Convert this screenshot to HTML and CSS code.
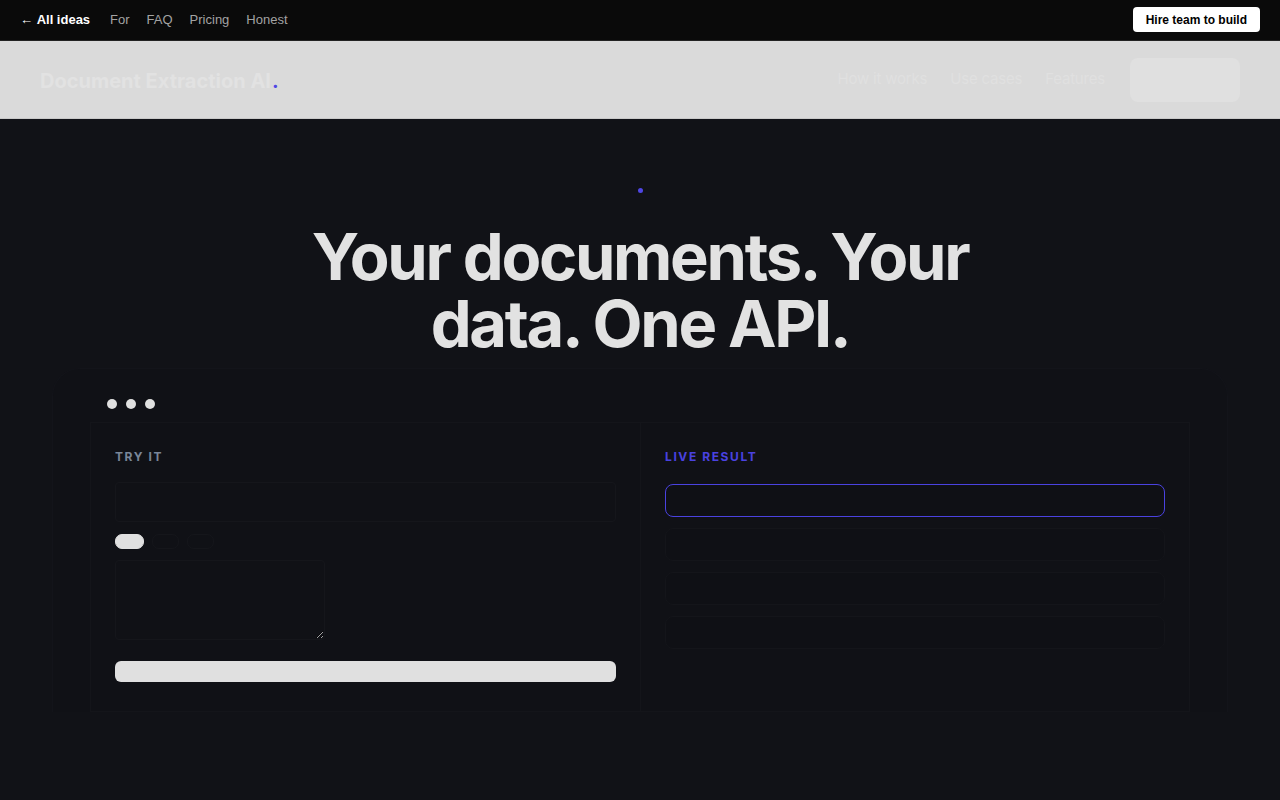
FILE: index.html
```html
<!DOCTYPE html>
<html>
    <head>
        <title>Document Extraction AI</title>
        <link rel="stylesheet" href="styles.css">
    </head>
    <body>
        <div class="topbar">
            <nav class="crumbs">
                <a class="back" href="#">&larr; <b>All ideas</b></a>
                <a href="#">For</a>
                <a href="#">FAQ</a>
                <a href="#">Pricing</a>
                <a href="#">Honest</a>
            </nav>
            <a class="hire" href="#">Hire team to build</a>
        </div>
        <header class="site">
            <div class="logo">Document Extraction AI<span class="dot">.</span></div>
            <nav class="links">
                <a href="#">How it works</a>
                <a href="#">Use cases</a>
                <a href="#">Features</a>
                <span class="cta"></span>
            </nav>
        </header>
        <main>
            <section class="hero">
                <span class="pip"></span>
                <h1>Your documents. Your<br>data. One API.</h1>
            </section>
            <section class="demo">
                <div class="lights">
                    <span></span><span></span><span></span>
                </div>
                <div class="panes">
                    <div class="pane">
                        <h4 class="label">Try it</h4>
                        <div class="field"></div>
                        <div class="chips">
                            <span class="chip on"></span>
                            <span class="chip"></span>
                            <span class="chip"></span>
                        </div>
                        <textarea></textarea>
                        <button class="run"></button>
                    </div>
                    <div class="pane">
                        <h4 class="label live">Live result</h4>
                        <div class="result active"></div>
                        <div class="result"></div>
                        <div class="result"></div>
                        <div class="result"></div>
                    </div>
                </div>
            </section>
        </main>
    </body>
</html>
```
FILE: styles.css
```css
html, body {
    margin: 0;
    background: #111217;
}

body {
    font-family: Inter, "Liberation Sans", sans-serif;
    min-height: 800px;
}

a {
    text-decoration: none;
}

.topbar {
    display: flex;
    align-items: center;
    justify-content: space-between;
    height: 40px;
    padding: 0 20px;
    background: #0a0a0a;
    border-bottom: 1px solid #222;
    font-family: "Liberation Sans", Arial, sans-serif;
    font-size: 13px;
}

    .crumbs {
        display: flex;
        gap: 17px;
        margin-top: -2px;
    }

    .crumbs a {
        color: #a3a3a3;
    }

    .crumbs a.back {
        color: #fff;
        margin-right: 3px;
    }

    .hire {
        background: #fff;
        color: #000;
        font-weight: bold;
        font-size: 12px;
        padding: 6px 13px 5px;
        border-radius: 4px;
        margin-top: -1px;
    }

header.site {
    display: flex;
    align-items: center;
    justify-content: space-between;
    height: 77px;
    padding: 0 40px;
    background: #dadada;
    border-bottom: 1px solid #c8c8c8;
}

    .logo {
        font-size: 20px;
        font-weight: 700;
        letter-spacing: 0;
        color: #e2e2e2;
        margin-top: 2px;
    }

    .logo .dot {
        color: #4f46e5;
        margin-left: 1px;
    }

    .links {
        display: flex;
        align-items: center;
        gap: 23px;
        font-size: 15px;
    }

    .links a {
        color: #e0e0e0;
        letter-spacing: -0.2px;
        margin-top: -2px;
    }

    .links .cta {
        display: block;
        width: 110px;
        height: 44px;
        margin-left: 2px;
        border-radius: 8px;
        background: #e0e0e0;
    }

.hero {
    display: flex;
    flex-direction: column;
    align-items: center;
    padding-top: 69px;
}

    .pip {
        width: 5px;
        height: 5px;
        border-radius: 50%;
        background: #4f46e5;
    }

    .hero h1 {
        margin: 30px 0 0;
        text-align: center;
        font-size: 65px;
        line-height: 67px;
        font-weight: 700;
        letter-spacing: -2.3px;
        color: #e2e2e2;
    }

.demo {
    margin: 11px 52px 0;
    padding: 30px 37px 0;
    border: 1px solid #13141a;
    border-bottom: 0;
    border-radius: 28px 28px 0 0;
    background: #101116;
}

    .lights {
        display: flex;
        gap: 9px;
        padding-left: 17px;
    }

    .lights span {
        width: 10px;
        height: 10px;
        border-radius: 50%;
        background: #e0e0e0;
    }

    .panes {
        display: grid;
        grid-template-columns: 1fr 1fr;
        margin-top: 13px;
        border: 1px solid #14151a;
    }

    .pane {
        padding: 26px 24px 29px;
        display: flex;
        flex-direction: column;
        align-items: flex-start;
    }

    .pane + .pane {
        border-left: 1px solid #14151a;
    }

.label {
    margin: 0 0 18px;
    font-size: 12px;
    font-weight: 700;
    letter-spacing: 1.6px;
    text-transform: uppercase;
    color: #7a8699;
}

    .label.live {
        color: #4a42e0;
    }

.field {
    width: 100%;
    height: 40px;
    border: 1px solid #15161b;
    border-radius: 4px;
    box-sizing: border-box;
}

.chips {
    display: flex;
    gap: 8px;
    margin-top: 12px;
}

    .chip {
        width: 27px;
        height: 15px;
        box-sizing: border-box;
        border: 1px solid #15161b;
        border-radius: 7px;
    }

    .chip.on {
        width: 29px;
        background: #e0e0e0;
        border-color: #e0e0e0;
    }

textarea {
    display: block;
    width: 210px;
    height: 80px;
    margin-top: 11px;
    box-sizing: border-box;
    background: transparent;
    border: 1px solid #15161b;
    border-radius: 4px;
}

.run {
    width: 100%;
    height: 21px;
    margin-top: 21px;
    border: 0;
    border-radius: 6px;
    background: #e0e0e0;
}

.result {
    width: 100%;
    height: 33px;
    margin-bottom: 11px;
    box-sizing: border-box;
    border: 1px solid #14151a;
    border-radius: 8px;
    background: #0f1015;
}

    .result.active {
        margin-top: 2px;
        border-color: #4a42e0;
    }
```
